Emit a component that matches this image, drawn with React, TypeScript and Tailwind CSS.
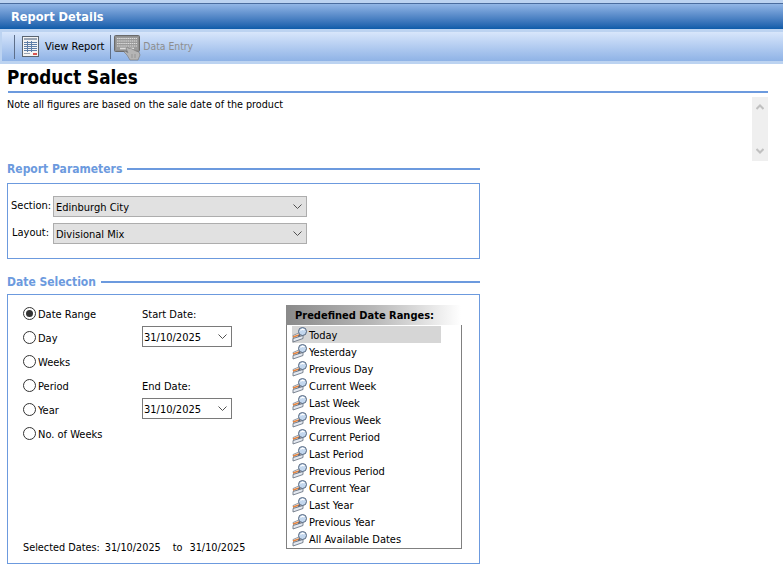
function ReportIcon() {
  return (
    <svg width="17" height="21" viewBox="0 0 17 21" className="shrink-0">
      <rect x="0.5" y="0.5" width="16" height="20" fill="#f4f4f4" stroke="#5a6470" />
      <rect x="2" y="2" width="13" height="2" fill="#9aa5b4" />
      <g stroke="#5f7fa8" strokeWidth="1">
        <path d="M2 6.5h13M2 8.5h13M2 10.5h13M2 12.5h13M2 14.5h13" />
        <path d="M5.5 5v11M9.5 5v11" />
      </g>
      <rect x="11" y="17" width="4" height="2" fill="#d9534f" />
      <rect x="2" y="17" width="6" height="1" fill="#9aa5b4" />
    </svg>
  );
}

function KeyboardIcon() {
  return (
    <svg width="27" height="26" viewBox="0 0 27 26" className="shrink-0">
      <rect x="0.5" y="0.5" width="25" height="16" rx="1" fill="#8f8f8f" stroke="#6a6a6a" />
      <rect x="2" y="2" width="22" height="13" fill="#9a9a9a" />
      <g stroke="#dcdcdc" strokeWidth="1" strokeDasharray="1.5 0.6">
        <path d="M3 3.5h20M3 6h20M3 8.5h20M3 11h20" />
      </g>
      <path d="M6 13.5h14" stroke="#dcdcdc" strokeWidth="1.5" />
      <path d="M12 13l2-1 1 2 1-1 6 3 3 1 1 3-2 5h-8l-3-5-3-3 1-1 3 2z" fill="#b5b5b5" stroke="#808080" strokeWidth="0.7" />
      <path d="M18 19v4M21 19v4" stroke="#808080" strokeWidth="0.6" />
    </svg>
  );
}

function DateIcon() {
  return (
    <svg width="16" height="16" viewBox="0 0 16 16" className="shrink-0">
      <path d="M1 8.5L8 5.5l3 3-9 3z" fill="#f2f4f8" stroke="#6c7684" strokeWidth="0.7" />
      <path d="M1 10l9-3" stroke="#e8853d" strokeWidth="1.5" />
      <path d="M1 11.5L11 8.5v3L1 15z" fill="#e4e9f1" stroke="#5f6b7a" strokeWidth="0.8" />
      <circle cx="10.5" cy="4.5" r="4" fill="#c3d7ee" stroke="#56677e" strokeWidth="1" />
      <path d="M8.5 3.5c1-1.5 3-1.5 4-.5" fill="none" stroke="#ffffff" strokeWidth="1.2" />
      <path d="M8 8l-2 1.5" stroke="#56677e" strokeWidth="1.2" />
    </svg>
  );
}

function Chevron() {
  return (
    <svg width="9" height="5" viewBox="0 0 9 5" className="shrink-0">
      <path d="M0.5 0.5L4.5 4.5L8.5 0.5" fill="none" stroke="#505050" strokeWidth="1" />
    </svg>
  );
}

function SectionTitle({ title }: { title: string }) {
  return (
    <div className="flex w-[473px] items-center gap-[5px]">
      <span className="text-[12px] leading-[18px] font-bold text-[#6c9ade] whitespace-nowrap">{title}</span>
      <div className="h-[2px] flex-1 bg-[#6c9ade]" />
    </div>
  );
}

function Select({ value }: { value: string }) {
  return (
    <div className="flex h-[21px] w-[254px] items-center justify-between border border-[#adadad] bg-[#e1e1e1] pr-[4px] pl-[2px]">
      <span className="pt-[1px] text-[11px] leading-none text-black">{value}</span>
      <Chevron />
    </div>
  );
}

function DateCombo() {
  return (
    <div className="flex h-[21px] w-[90px] items-center justify-between border border-[#7a7a7a] bg-white pr-[4px] pl-[1px]">
      <span className="pt-[1px] text-[11px] leading-none text-black">31/10/2025</span>
      <Chevron />
    </div>
  );
}

function Radio({ label, checked }: { label: string; checked?: boolean }) {
  return (
    <div className="flex h-[24px] items-center gap-[2px]">
      <span className="flex h-[13px] w-[13px] items-center justify-center rounded-full border border-[#333] bg-white">
        {checked && <span className="h-[7px] w-[7px] rounded-full bg-[#333]" />}
      </span>
      <span className="pt-[2px] text-[11px] leading-none text-black">{label}</span>
    </div>
  );
}

const ranges = [
  'Today', 'Yesterday', 'Previous Day', 'Current Week', 'Last Week', 'Previous Week', 'Current Period',
  'Last Period', 'Previous Period', 'Current Year', 'Last Year', 'Previous Year', 'All Available Dates',
];

export default function App() {
  return (
    <div className="h-[572px] w-[783px] overflow-hidden bg-white font-['DejaVu_Sans',sans-serif] font-stretch-condensed text-[11px] text-black">
      {/* title bar */}
      <div className="h-[3px] bg-[#bcd3f1]" />
      <div className="h-[1px] bg-[#4a6c9e]" />
      <div className="flex h-[25px] items-center bg-gradient-to-b from-[#92b6e6] to-[#0b5ba9] pt-[1px] pl-[11px]">
        <span className="text-[12.7px] leading-none font-bold text-white">Report Details</span>
      </div>
      <div className="h-[3px] bg-[#bcd3f1]" />
      {/* toolbar */}
      <div className="flex h-[29px] items-center border-l-2 border-[#bcd3f1] bg-gradient-to-b from-[#d8e6fb] to-[#8fb3e6] pl-[12px]">
        <div className="h-[24px] w-[1px] bg-[#5d6f8a]" />
        <div className="ml-[7px]"><ReportIcon /></div>
        <span className="ml-[6px] text-[11px] leading-none text-black">View Report</span>
        <div className="ml-[6px] h-[24px] w-[1px] bg-[#5d6f8a]" />
        <div className="mt-[3px] ml-[3px]"><KeyboardIcon /></div>
        <span className="ml-[2px] text-[10.3px] leading-none text-[#8d8d8d]">Data Entry</span>
      </div>
      <div className="h-[3px] bg-[#bcd3f1]" />

      <div className="pl-[7px]">
        {/* heading */}
        <h1 className="mt-[2px] text-[18.7px] leading-[24px] font-bold text-black">Product Sales</h1>
        <div className="mt-[1px] ml-[1px] h-[2px] w-[760px] bg-[#6c9ade]" />
        <div className="mt-[4px] flex h-[64px] w-[761px] justify-between">
          <p className="mt-[1px] text-[10.7px] leading-[14px]">Note all figures are based on the sale date of the product</p>
          <div className="flex h-full w-[16px] flex-col items-center justify-between bg-[#efefef] py-[7px]">
            <svg width="8" height="6" viewBox="0 0 8 6"><path d="M0.5 5L4 1.5L7.5 5" fill="none" stroke="#c0c0c0" strokeWidth="2" /></svg>
            <svg width="8" height="6" viewBox="0 0 8 6"><path d="M0.5 1L4 4.5L7.5 1" fill="none" stroke="#c0c0c0" strokeWidth="2" /></svg>
          </div>
        </div>

        {/* report parameters */}
        <div className="mt-[-1px]"><SectionTitle title="Report Parameters" /></div>
        <div className="mt-[5px] flex h-[76px] w-[473px] flex-col gap-[6px] border border-[#6c9ade] pt-[12px] pl-[3px]">
          <div className="flex items-center gap-[3px]">
            <span className="w-[39px] pb-[3px] text-right text-[11px] leading-none">Section:</span>
            <Select value="Edinburgh City" />
          </div>
          <div className="flex items-center gap-[3px]">
            <span className="w-[39px] pr-[1px] pb-[3px] text-right text-[11px] leading-none">Layout:</span>
            <Select value="Divisional Mix" />
          </div>
        </div>

        {/* date selection */}
        <div className="mt-[14px]"><SectionTitle title="Date Selection" /></div>
        <div className="mt-[3px] flex h-[270px] w-[473px] flex-col border border-[#6c9ade] pl-[15px]">
          <div className="flex">
            <div className="mt-[6px] w-[119px]">
              <Radio label="Date Range" checked />
              <Radio label="Day" />
              <Radio label="Weeks" />
              <Radio label="Period" />
              <Radio label="Year" />
              <Radio label="No. of Weeks" />
            </div>
            <div className="mt-[12px] w-[144px]">
              <div className="h-[19px] pt-[1px] text-[11px] leading-[14px]">Start Date:</div>
              <DateCombo />
              <div className="mt-[32px] h-[19px] pt-[1px] text-[11px] leading-[14px]">End Date:</div>
              <DateCombo />
            </div>
            <div className="mt-[10px] w-[176px]">
              <div className="flex h-[20px] w-[175px] items-center bg-gradient-to-r from-[#8a8a8a] via-[#b8b8b8] to-white pt-[1px] pl-[9px] text-[11px] leading-none font-bold text-black">
                Predefined Date Ranges:
              </div>
              <div className="flex h-[224px] w-[176px] flex-col border border-t-0 border-[#808080] bg-white pt-[1px] pl-[5px]">
                {ranges.map((r, i) => (
                  <div key={r} className={`flex h-[17px] w-[149px] shrink-0 items-center gap-[1px] ${i === 0 ? 'bg-[#d6d6d6]' : ''}`}>
                    <DateIcon />
                    <span className="pt-[1px] text-[11px] leading-none whitespace-nowrap">{r}</span>
                  </div>
                ))}
              </div>
            </div>
          </div>
          <div className="mt-[-8px] flex text-[10.8px] leading-[14px]">
            <span>Selected Dates:</span>
            <span className="ml-[5px]">31/10/2025</span>
            <span className="ml-[12px]">to</span>
            <span className="ml-[7px]">31/10/2025</span>
          </div>
        </div>
      </div>
    </div>
  );
}
